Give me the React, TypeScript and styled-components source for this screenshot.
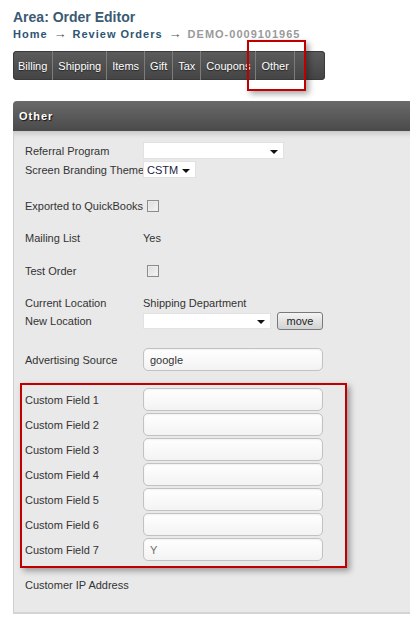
import React from 'react';
import styled, { createGlobalStyle } from 'styled-components';

const GlobalStyle = createGlobalStyle`
  html, body {
    margin: 0;
    padding: 0;
    background: #ffffff;
    overflow: hidden;
  }
  body {
    font-family: "Liberation Sans", Arial, sans-serif;
    font-size: 11px;
    color: #333333;
  }
`;

const Page = styled.div`
  width: 410px;
  height: 630px;
  overflow: hidden;
  padding: 9px 0 0 13px;
  box-sizing: border-box;
`;

const Title = styled.h1`
  margin: 0;
  font-size: 14px;
  line-height: 17px;
  font-weight: bold;
  color: #3b5a72;
`;

const Crumbs = styled.div`
  margin-top: 1px;
  display: flex;
  align-items: center;
  gap: 6px;
  font-size: 11px;
  line-height: 14px;
  font-weight: bold;
  letter-spacing: 1px;
  color: #2e5573;
`;

const Crumb = styled.span<{ $current?: boolean }>`
  color: ${(p) => (p.$current ? '#9a9a9a' : '#2e5573')};
`;

const Arrow = styled.span`
  color: #555555;
  font-weight: normal;
  font-size: 13px;
  letter-spacing: 0;
`;

const TabWrap = styled.div`
  position: relative;
  margin-top: 10px;
  width: 312px;
`;

const TabBar = styled.nav`
  display: flex;
  height: 29px;
  border-radius: 4px;
  background: linear-gradient(#5c5c5c, #444444);
  box-shadow: 0 0 0 1px #3a3a3a inset;
  overflow: hidden;
`;

const Tab = styled.a`
  display: flex;
  align-items: center;
  padding: 0 5px;
  border-right: 1px solid #7c7c7c;
  color: #ffffff;
  font-size: 11px;
  text-shadow: 0 1px 1px #222;
  text-decoration: none;
`;

const Highlight = styled.div`
  position: absolute;
  left: 234px;
  top: -11px;
  width: 59px;
  height: 51px;
  box-sizing: border-box;
  border: 2px solid #c00000;
  box-shadow: 3px 3px 6px rgba(0, 0, 0, 0.35);
  pointer-events: none;
`;

const Panel = styled.section`
  margin-top: 21px;
  width: 420px;
`;

const PanelHead = styled.div`
  height: 30px;
  display: flex;
  align-items: center;
  padding-left: 6px;
  border-top-left-radius: 4px;
  background: linear-gradient(#6a6a6a, #4a4a4a);
  color: #ffffff;
  font-weight: bold;
  font-size: 11px;
  letter-spacing: 1px;
  text-shadow: 1px 1px 1px #111;
`;

const PanelBody = styled.div`
  background: #e9e9e9;
  border-left: 1px solid #cfcfcf;
  border-bottom: 2px solid #d4d4d4;
  padding: 11px 0 19px 11px;
  box-shadow: inset 0 8px 6px -6px rgba(0, 0, 0, 0.18);
`;

const Row = styled.div<{ $h?: number; $mt?: number }>`
  display: grid;
  grid-template-columns: 118px 180px;
  align-items: center;
  height: ${(p) => p.$h ?? 17}px;
  margin-top: ${(p) => p.$mt ?? 0}px;
  white-space: nowrap;
`;

const Label = styled.span`
  color: #333333;
`;

const Value = styled.span`
  color: #333333;
`;

const Select = styled.div<{ $w: number; $h?: number }>`
  width: ${(p) => p.$w}px;
  height: ${(p) => p.$h ?? 17}px;
  box-sizing: border-box;
  display: flex;
  align-items: center;
  justify-content: space-between;
  padding: 0 5px 0 3px;
  background: #ffffff;
  border: 1px solid #e2e2e2;
  color: #1c1c44;
`;

const Caret = styled.span`
  width: 0;
  height: 0;
  border-left: 4px solid transparent;
  border-right: 4px solid transparent;
  border-top: 4px solid #111111;
  margin-top: 2px;
`;

const Check = styled.span`
  margin-left: 4px;
  width: 12px;
  height: 12px;
  box-sizing: border-box;
  border: 1px solid #8c8c8c;
  background: linear-gradient(135deg, #dcdcdc, #f6f6f6);
  box-shadow: inset 0 0 0 1px #ececec;
`;

const Inline = styled.div`
  display: flex;
  align-items: center;
  gap: 6px;
`;

const Button = styled.button`
  width: 46px;
  height: 18px;
  padding: 0;
  border: 1px solid #7a7a7a;
  border-radius: 3px;
  background: linear-gradient(#f4f4f4, #d2d2d2);
  font-family: inherit;
  font-size: 11px;
  color: #222222;
`;

const TextInput = styled.input<{ $muted?: boolean }>`
  width: 180px;
  height: 23px;
  box-sizing: border-box;
  padding: 0 6px;
  border: 1px solid #c2c2c2;
  border-radius: 5px;
  background: linear-gradient(#ffffff, #f3f3f3);
  box-shadow: inset 0 1px 2px rgba(0, 0, 0, 0.06);
  font-family: inherit;
  font-size: 11px;
  color: ${(p) => (p.$muted ? '#6f6f6f' : '#333333')};
  outline: none;
`;

const CustomBox = styled.div`
  margin: 12px 0 0 -5px;
  width: 327px;
  box-sizing: border-box;
  border: 2px solid #c00000;
  padding: 3px 0 5px 3px;
  display: flex;
  flex-direction: column;
  gap: 2px;
  box-shadow: 3px 3px 6px rgba(0, 0, 0, 0.35);
`;

const tabs = ['Billing', 'Shipping', 'Items', 'Gift', 'Tax', 'Coupons', 'Other'];
const customValues = ['', '', '', '', '', '', 'Y'];

export default function App() {
  return (
    <Page>
      <GlobalStyle />
      <Title>Area: Order Editor</Title>
      <Crumbs>
        <Crumb>Home</Crumb>
        <Arrow>→</Arrow>
        <Crumb>Review Orders</Crumb>
        <Arrow>→</Arrow>
        <Crumb $current>DEMO-0009101965</Crumb>
      </Crumbs>

      <TabWrap>
        <TabBar>
          {tabs.map((t) => (
            <Tab key={t}>{t}</Tab>
          ))}
        </TabBar>
        <Highlight />
      </TabWrap>

      <Panel>
        <PanelHead>Other</PanelHead>
        <PanelBody>
          <Row>
            <Label>Referral Program</Label>
            <Select $w={141}>
              <span />
              <Caret />
            </Select>
          </Row>
          <Row $mt={2}>
            <Label>Screen Branding Theme</Label>
            <Select $w={53}>
              <span>CSTM</span>
              <Caret />
            </Select>
          </Row>
          <Row $mt={19}>
            <Label>Exported to QuickBooks</Label>
            <Check />
          </Row>
          <Row $mt={15}>
            <Label>Mailing List</Label>
            <Value>Yes</Value>
          </Row>
          <Row $mt={16}>
            <Label>Test Order</Label>
            <Check />
          </Row>
          <Row $mt={15}>
            <Label>Current Location</Label>
            <Value>Shipping Department</Value>
          </Row>
          <Row $h={18} $mt={1}>
            <Label>New Location</Label>
            <Inline>
              <Select $w={128} $h={16}>
                <span />
                <Caret />
              </Select>
              <Button>move</Button>
            </Inline>
          </Row>
          <Row $h={23} $mt={18}>
            <Label>Advertising Source</Label>
            <TextInput defaultValue="google" />
          </Row>

          <CustomBox>
            {customValues.map((v, i) => (
              <Row key={i} $h={23}>
                <Label>Custom Field {i + 1}</Label>
                <TextInput defaultValue={v} $muted />
              </Row>
            ))}
          </CustomBox>

          <Row $mt={8}>
            <Label>Customer IP Address</Label>
          </Row>
        </PanelBody>
      </Panel>
    </Page>
  );
}
